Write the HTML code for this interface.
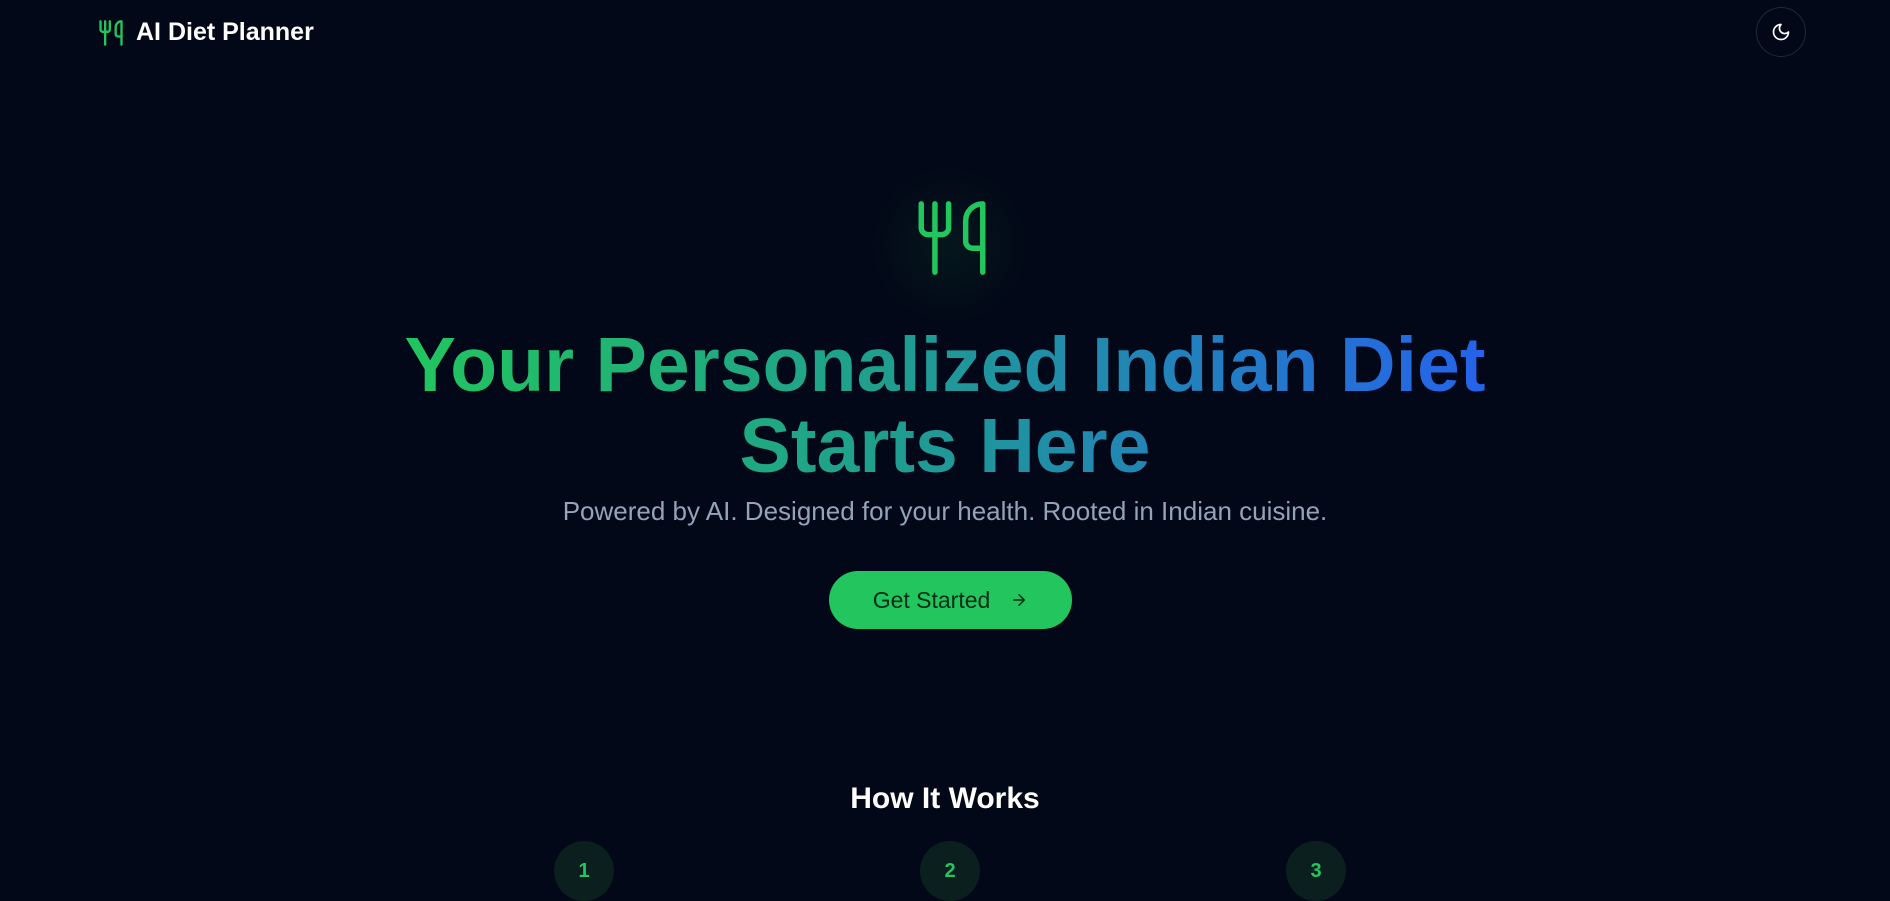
<!DOCTYPE html>
<html><head><meta charset="utf-8"><style>
*{margin:0;padding:0;box-sizing:border-box}
body{width:1890px;height:896px;overflow:hidden;background:#020817;font-family:"Liberation Sans",sans-serif;position:relative;color:#fff}
.abs{position:absolute}
.logo{left:97px;top:19px;width:28px;height:28px}
.brand{left:136px;top:16px;font-size:25px;font-weight:bold;line-height:32px}
.moon{left:1756px;top:7px;width:50px;height:50px;border:1px solid #1e293b;border-radius:50%;display:flex;align-items:center;justify-content:center}
.glow{left:870px;top:165px;width:160px;height:160px;border-radius:50%;background:radial-gradient(circle,rgba(34,197,94,0.08),rgba(34,197,94,0) 70%)}
.hero{left:911px;top:197px;width:82px;height:82px}
h1{position:absolute;left:0;width:1890px;top:325px;text-align:center;font-size:77px;line-height:81px;font-weight:bold}
h1 span{background:linear-gradient(90deg,#22c55e 0%,#1f9e8f 45%,#2563eb 100%);-webkit-background-clip:text;background-clip:text;color:transparent;display:inline-block}
.sub{left:0;width:1890px;top:496px;text-align:center;font-size:26px;color:#94a3b8}
.btn{left:829px;top:571px;width:243px;height:58px;border-radius:29px;background:#22c55e;color:#052e16;font-size:23px;display:flex;align-items:center;justify-content:center;gap:20px}
.how{left:0;width:1890px;top:782px;text-align:center;font-size:30px;font-weight:bold}
.c{top:841px;width:60px;height:60px;border-radius:50%;background:#0a1f1e;color:#22c55e;font-weight:bold;font-size:20px;display:flex;align-items:center;justify-content:center}
</style></head><body>
<svg class="abs logo" viewBox="0 0 24 24" fill="none" stroke="#22c55e" stroke-width="2" stroke-linecap="round" stroke-linejoin="round"><path d="M3 2v7c0 1.1.9 2 2 2h4a2 2 0 0 0 2-2V2"/><path d="M7 2v20"/><path d="M21 15V2a5 5 0 0 0-5 5v6c0 1.1.9 2 2 2h3Zm0 0v7"/></svg>
<div class="abs brand">AI Diet Planner</div>
<div class="abs moon"><svg width="20" height="20" viewBox="0 0 24 24" fill="none" stroke="#fff" stroke-width="2" stroke-linecap="round" stroke-linejoin="round"><path d="M12 3a6 6 0 0 0 9 9 9 9 0 1 1-9-9Z"/></svg></div>
<div class="abs glow"></div>
<svg class="abs hero" viewBox="0 0 24 24" fill="none" stroke="#22c55e" stroke-width="1.6" stroke-linecap="round" stroke-linejoin="round"><path d="M3 2v7c0 1.1.9 2 2 2h4a2 2 0 0 0 2-2V2"/><path d="M7 2v20"/><path d="M21 15V2a5 5 0 0 0-5 5v6c0 1.1.9 2 2 2h3Zm0 0v7"/></svg>
<h1><span>Your Personalized Indian Diet<br>Starts Here</span></h1>
<div class="abs sub">Powered by AI. Designed for your health. Rooted in Indian cuisine.</div>
<div class="abs btn"><span>Get Started</span><svg width="18" height="18" viewBox="0 0 24 24" fill="none" stroke="#052e16" stroke-width="2" stroke-linecap="round" stroke-linejoin="round"><path d="M5 12h14"/><path d="m12 5 7 7-7 7"/></svg></div>
<div class="abs how">How It Works</div>
<div class="abs c" style="left:554px">1</div>
<div class="abs c" style="left:920px">2</div>
<div class="abs c" style="left:1286px">3</div>
</body></html>
